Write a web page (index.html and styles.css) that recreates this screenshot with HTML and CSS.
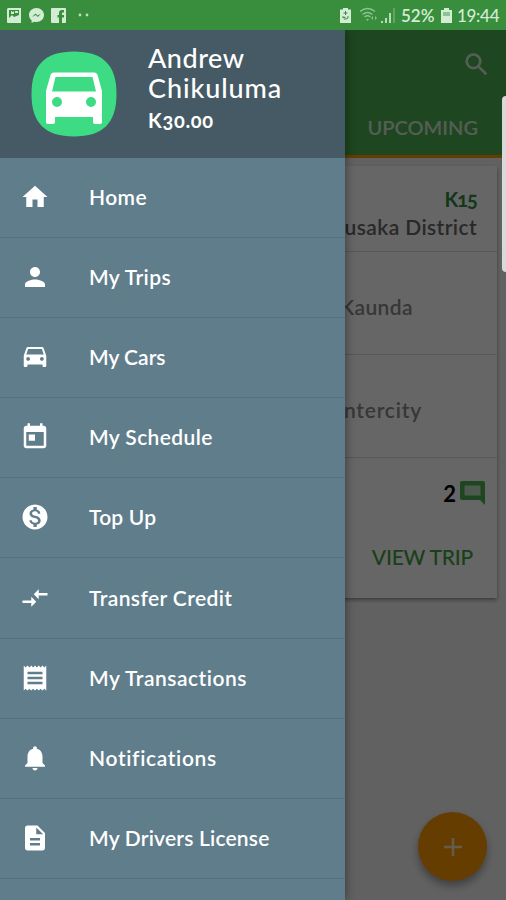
FILE: index.html
```html
<!DOCTYPE html>
<html lang="en">
<head>
<meta charset="utf-8">
<title>Trips</title>
<link rel="stylesheet" href="styles.css">
</head>
<body>
<div class="phone">
  <header class="status">
    <div class="status-left">
      <svg width="15" height="15" viewBox="0 0 15 15"><path fill="#d3ecd4" fill-rule="evenodd" d="M1 0h13v15H1a1 1 0 0 1-1-1V1zM2 2v8l3-3 2 2 5-2V2zM4 3l2 1 1-1v3H4zM8 3h3v2H8z"/></svg>
      <svg width="15" height="15" viewBox="0 0 15 15"><path fill="#d3ecd4" d="M7.500 0C3.300 0 0 3 0 7c0 2.200 1 4 2.600 5.300V15l2.400-1.300c.8.2 1.600.3 2.500.3 4.200 0 7.500-3 7.500-7s-3.300-7-7.500-7z"/><path d="M3 9l3.500-3.500 2 2L12 5.500 8.800 9l-2-2z" fill="#388e3c"/></svg>
      <svg width="15" height="15" viewBox="0 0 15 15"><path fill="#d3ecd4" d="M1 0h13a1 1 0 0 1 1 1v13a1 1 0 0 1-1 1h-3V9.500h2V7h-2V5.500c0-.8.300-1 1-1h1V2h-2C9 2 8 3.300 8 5v2H6.500v2.500H8V15H1a1 1 0 0 1-1-1V1a1 1 0 0 1 1-1z"/></svg>
      <svg class="more" width="11" height="4" viewBox="0 0 11 4"><circle cx="2" cy="2" r="1.400" fill="#b9dfbb"/><circle cx="9" cy="2" r="1.400" fill="#b9dfbb"/></svg>
    </div>
    <div class="status-right">
      <svg width="11" height="15" viewBox="0 0 11 15"><path fill="#d3ecd4" d="M3 0h5v1.500h3V15H0V1.500h3z"/><path fill="none" stroke="#388e3c" d="M5.500 3v4M3.500 5h4M3 8v2l2-1v3M8 8v2l-2 1"/></svg>
      <svg class="wifi" width="19" height="16" viewBox="0 0 19 16"><g fill="none" stroke="#8cc48e" stroke-width="1.300"><path d="M1 4.500q7.500-6 15 0M3.500 7.500q5-4 10 0M5.500 10q3-2.500 6 0"/></g><path d="M7 12h3l-1.500 2zM12 11l2-2v4zM18 11l-2-2v4z" fill="#8cc48e"/></svg>
      <svg class="signal" width="14" height="15" viewBox="0 0 14 15"><path fill="#b4dcb5" d="M0 13h2v2H0zM4 10h2v5H4zM8 5h2v10H8z"/><path fill="#5fa662" d="M12 0h2v15h-2z"/></svg>
      <span class="pct">52%</span>
      <svg class="batt" width="11" height="15" viewBox="0 0 11 15"><path fill="#d3ecd4" d="M3 0h5v2h3v13H0V2h3z"/><path fill="#8fc391" d="M2 4h7v4H2z"/></svg>
      <span class="time">19:44</span>
    </div>
  </header>
  <div class="stage">
    <main class="page">
      <div class="appbar">
        <svg class="search" width="24" height="24" viewBox="0 0 24 24"><path fill="none" stroke="#fff" stroke-width="2.700" d="M13.600 13.600l7.700 7.700M8.500 1.500a6.800 6.800 0 1 0 0 13.600 6.800 6.800 0 0 0 0-13.600z"/></svg>
        <span class="tab">UPCOMING</span>
      </div>
      <section class="card">
        <div class="trip-head"><span class="price">K15</span><span class="place">Lusaka District</span></div>
        <div class="stop from"><span>Kaunda</span></div>
        <div class="stop to"><span>Intercity</span></div>
        <div class="trip-foot">
          <div class="comments"><b>2</b><svg width="25" height="24" viewBox="0 0 25 24"><path fill="#4caf50" d="M2 0h21a2 2 0 0 1 2 2v22l-5-5H2a2 2 0 0 1-2-2V2a2 2 0 0 1 2-2z"/><path fill="#c3e2c4" d="M4.500 4.500h16v10h-16z"/></svg></div>
          <span class="view">VIEW TRIP</span>
        </div>
      </section>
      <div class="fab"><svg width="18" height="18" viewBox="0 0 18 18"><path d="M9 0v18M0 9h18" stroke="#fff" stroke-width="2.400"/></svg></div>
    </main>
    <div class="scrim"></div>
    <aside class="drawer">
      <div class="profile">
        <svg class="logo" width="86" height="86" viewBox="0 0 86 86"><path fill="#3ddc84" d="M43 .500C72 .500 85.500 14 85.500 43S72 85.500 43 85.500.500 72 .500 43 14 .500 43 .500z"/><path fill="#fff" fill-rule="evenodd" d="M23 21.500h40c2 0 3 1 3.600 2.500L71 40v31q0 2-2 2h-5q-2 0-2-2v-5H24v5q0 2-2 2h-5q-2 0-2-2V40l4.500-16c.6-1.500 1.500-2.500 3.500-2.500zM24.500 26L21 40.500h44L61.500 26zM26 46a5 5 0 1 0 0 10 5 5 0 0 0 0-10zm34 0a5 5 0 1 0 0 10 5 5 0 0 0 0-10z"/></svg>
        <div class="who"><span class="name n1">Andrew</span><span class="name n2">Chikuluma</span><span class="bal">K30.00</span></div>
      </div>
      <nav class="menu">
        <div class="item"><svg viewBox="0 0 24 24"><path d="M10 20v-6h4v6h5v-8h3L12 3 2 12h3v8z"/></svg><span class="wide">Home</span></div>
        <div class="item"><svg viewBox="0 0 24 24"><path d="M12 12c2.210 0 4-1.790 4-4s-1.790-4-4-4-4 1.790-4 4 1.790 4 4 4zm0 2c-2.670 0-8 1.340-8 4v2h16v-2c0-2.660-5.330-4-8-4z"/></svg><span class="wide">My Trips</span></div>
        <div class="item"><svg viewBox="0 0 24 24"><path d="M18.920 5.010C18.720 4.420 18.160 4 17.500 4h-11c-.66 0-1.210.42-1.420 1.010L3 11v8c0 .55.45 1 1 1h1c.55 0 1-.45 1-1v-1h12v1c0 .55.45 1 1 1h1c.55 0 1-.45 1-1v-8l-2.080-5.990zM6.500 15c-.83 0-1.500-.67-1.500-1.500S5.670 12 6.500 12s1.500.67 1.500 1.500S7.330 15 6.500 15zm11 0c-.83 0-1.500-.67-1.500-1.500s.67-1.500 1.500-1.500 1.500.67 1.500 1.500-.67 1.500-1.500 1.500zM5 10l1.500-4.500h11L19 10H5z"/></svg><span>My Cars</span></div>
        <div class="item"><svg viewBox="0 0 24 24"><path d="M19 3h-1V1h-2v2H8V1H6v2H5c-1.110 0-1.990.9-1.990 2L3 19c0 1.100.89 2 2 2h14c1.100 0 2-.9 2-2V5c0-1.100-.9-2-2-2zm0 16H5V8h14v11zM7 10h5v5H7z"/></svg><span class="wide">My Schedule</span></div>
        <div class="item"><svg viewBox="0 0 24 24"><path d="M12 2C6.480 2 2 6.480 2 12s4.480 10 10 10 10-4.480 10-10S17.520 2 12 2zm1.410 16.090V20h-2.670v-1.930c-1.710-.36-3.160-1.460-3.270-3.400h1.960c.1 1.050.82 1.870 2.650 1.870 1.960 0 2.400-.98 2.400-1.590 0-.83-.44-1.610-2.670-2.140-2.480-.6-4.180-1.620-4.180-3.670 0-1.720 1.390-2.840 3.110-3.210V4h2.670v1.950c1.860.45 2.790 1.860 2.850 3.390H14.300c-.05-1.110-.64-1.870-2.220-1.870-1.500 0-2.400.68-2.400 1.640 0 .84.65 1.390 2.670 1.910s4.180 1.390 4.180 3.910c-.01 1.830-1.380 2.830-3.120 3.160z"/></svg><span class="mid">Top Up</span></div>
        <div class="item"><svg viewBox="0 0 24 24"><path d="M9.010 14H2v2h7.010v3L13 15l-3.990-4v3zm5.980-1v-3H22V8h-7.010V5L11 9l3.990 4z"/></svg><span class="wide">Transfer Credit</span></div>
        <div class="item"><svg viewBox="0 0 24 24"><path d="M18 17H6v-2h12v2zm0-4H6v-2h12v2zm0-4H6V7h12v2zM3 22l1.500-1.500L6 22l1.500-1.500L9 22l1.500-1.500L12 22l1.500-1.500L15 22l1.500-1.500L18 22l1.500-1.500L21 22V2l-1.500 1.500L18 2l-1.500 1.500L15 2l-1.500 1.500L12 2l-1.500 1.500L9 2 7.500 3.500 6 2 4.500 3.500 3 2v20z"/></svg><span class="wider">My Transactions</span></div>
        <div class="item"><svg viewBox="0 0 24 24"><path d="M12 22c1.100 0 2-.9 2-2h-4c0 1.100.89 2 2 2zm6-6v-5c0-3.070-1.640-5.640-4.500-6.320V4c0-.83-.67-1.500-1.500-1.500s-1.500.67-1.500 1.500v.68C7.630 5.360 6 7.920 6 11v5l-2 2v1h16v-1l-2-2z"/></svg><span class="widest">Notifications</span></div>
        <div class="item"><svg viewBox="0 0 24 24"><path d="M14 2H6c-1.100 0-1.990.9-1.990 2L4 20c0 1.100.89 2 1.990 2H18c1.100 0 2-.9 2-2V8l-6-6zm2 16H8v-2h8v2zm0-4H8v-2h8v2zm-3-5V3.500L18.500 9H13z"/></svg><span class="mid">My Drivers License</span></div>
      </nav>
    </aside>
    <div class="edge"></div>
  </div>
</div>
</body>
</html>
```

FILE: styles.css
```css
* { box-sizing: border-box; }
body { margin: 0; font-family: Lato, "Open Sans", sans-serif; font-variant-ligatures: none; }
.phone { width: 506px; height: 900px; display: flex; flex-direction: column; overflow: hidden; }
svg { display: block; flex: none; }
span { white-space: nowrap; }

.status { height: 30px; flex: none; background: #388e3c; display: flex; justify-content: space-between; padding: 0 8px 0 7px; color: #d3ecd4; font-size: 17px; }
.status-left, .status-right { display: flex; align-items: center; }
.status-left { gap: 7px; }
.more { margin-left: 5px; }
.wifi { margin-left: 8px; }
.signal { margin-left: 3px; }
.pct { margin-left: 6px; width: 33px; font-weight: 600; }
.batt { margin-left: 7px; }
.time { margin-left: 5px; width: 41px; font-weight: 500; letter-spacing: -.3px; }

.stage { flex: 1; position: relative; display: flex; overflow: hidden; background: #f3f3f3; }
.page { flex: 1; display: flex; flex-direction: column; }
.appbar { height: 128px; flex: none; background: #4caf50; border-bottom: 3px solid #ff9800; display: flex; flex-direction: column; align-items: flex-end; padding: 23px 17px 0 0; }
.tab { margin: 37px 11px 0 0; color: #fff; opacity: .75; font-size: 20px; line-height: 26px; font-weight: 600; }
.search { opacity: .75; }
.card { margin: 8px 9px 0 8px; height: 432px; background: #fff; box-shadow: 0 2px 4px rgba(0, 0, 0, .4); display: flex; flex-direction: column; color: #757575; font-size: 21px; }
.trip-head { height: 86px; border-bottom: 1px solid #dcdcdc; display: flex; flex-direction: column; align-items: flex-end; padding: 19px 20px 0 0; line-height: 28px; }
.price { color: #2e8b45; font-size: 20px; font-weight: 700; letter-spacing: -.9px; font-feature-settings: "onum"; }
.place { color: #666; letter-spacing: .4px; font-weight: 600; }
.stop { height: 103px; border-bottom: 1px solid #dcdcdc; display: flex; justify-content: flex-end; align-items: center; padding-top: 7px; letter-spacing: .4px; color: #8a8a8a; font-weight: 600; }
.from { padding-right: 84px; }
.to { padding-right: 75px; letter-spacing: .8px; }
.trip-foot { flex: 1; display: flex; flex-direction: column; align-items: flex-end; padding: 23px 12px 0 0; }
.comments { display: flex; align-items: center; gap: 4px; height: 24px; color: #000; font-size: 22px; }
.view { margin: 39px 12px 0 0; color: #3fa044; font-size: 21px; line-height: 26px; font-weight: 500; letter-spacing: -.2px; }
.fab { flex: none; margin: 214px 19px 0 auto; width: 69px; height: 69px; border-radius: 50%; background: #ff9800; box-shadow: 0 5px 9px rgba(0, 0, 0, .35); display: flex; align-items: center; justify-content: center; }
.fab svg { opacity: .75; }
.scrim { position: absolute; inset: 0; background: rgba(0, 0, 0, .6); }

.drawer { position: absolute; left: 0; top: 0; width: 345px; height: 870px; overflow: hidden; background: #607d8b; color: #fff; box-shadow: 0 0 10px rgba(0, 0, 0, .45); }
.profile { height: 127.500px; background: #455a64; display: flex; padding: 20.500px 0 0 31px; }
.who { margin-left: 31px; margin-top: -8px; display: flex; flex-direction: column; }
.name { font-size: 27px; line-height: 30px; font-weight: 500; }
.n1 { letter-spacing: .5px; }
.n2 { letter-spacing: .9px; }
.bal { font-size: 20px; line-height: 28px; margin-top: 3px; font-weight: 700; letter-spacing: .7px; font-feature-settings: "onum"; }
.item { height: 80.200px; border-bottom: 1px solid #56727e; display: flex; align-items: center; padding: 0 0 1px 20px; }
.item svg { width: 30px; height: 30px; fill: #fff; }
.item span { margin-left: 39px; font-size: 21px; line-height: 28px; font-weight: 600; }
.item .wide { letter-spacing: .4px; }
.item .wider { letter-spacing: .5px; }
.item .widest { letter-spacing: .65px; }
.item .mid { letter-spacing: .2px; }

.edge { position: absolute; right: 0; top: 66px; width: 4px; height: 176px; background: #d9d9d9; border-radius: 4px 0 0 4px; }
```
